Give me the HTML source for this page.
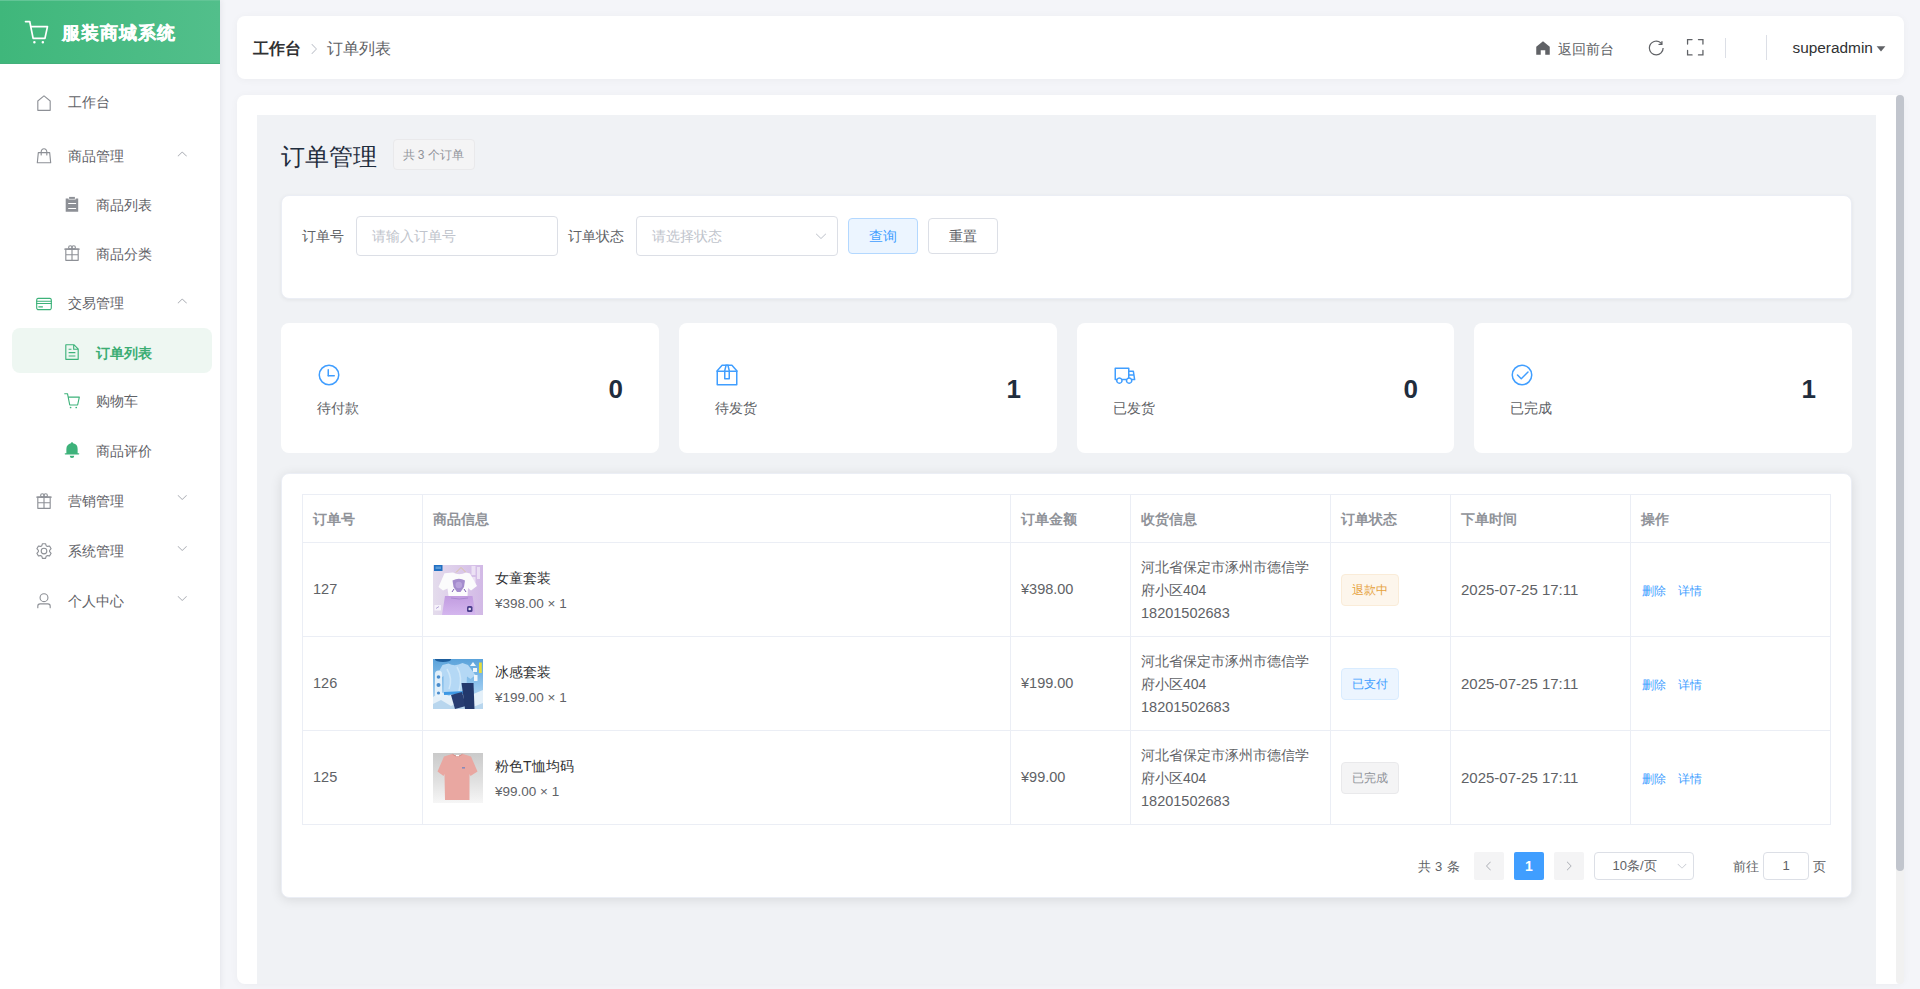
<!DOCTYPE html>
<html lang="zh"><head><meta charset="utf-8"><title>订单列表</title>
<style>
*{box-sizing:border-box;margin:0;padding:0}
html,body{width:1920px;height:989px;overflow:hidden}
body{background:#f4f5f9;font-family:"Liberation Sans",sans-serif;color:#606266;position:relative;font-size:14px}
.abs{position:absolute}
svg{display:block}
.t{position:absolute;white-space:nowrap;line-height:20px}
#side{position:absolute;left:0;top:0;width:220px;height:989px;background:#fff;box-shadow:1px 0 6px rgba(0,21,41,.07);z-index:2}
#logo{position:absolute;left:0;top:0;width:220px;height:64px;background:linear-gradient(90deg,#3fb77b,#52bf8b);border-top:1px solid #62c596;border-bottom:1px solid #43b07b}
.prod{overflow:hidden}

.p0{background:linear-gradient(135deg,#e6d9f0,#d4bfe6)}
.p1{background:linear-gradient(180deg,#5ea4dc,#a8d0f0 70%,#e0eef8)}
.p2{background:linear-gradient(180deg,#c8c8c8,#f2f2f2)}
</style></head>
<body>
<div id="side">
<div id="logo">
<svg class="abs" style="left:23px;top:17.6px" width="27" height="27" viewBox="0 0 1024 1024" fill="#fff"><path d="M432 928a48 48 0 1 1 0-96 48 48 0 0 1 0 96m320 0a48 48 0 1 1 0-96 48 48 0 0 1 0 96M96 128a32 32 0 0 1 0-64h160a32 32 0 0 1 31.36 25.728L320.64 256H928a32 32 0 0 1 31.296 38.72l-96 448A32 32 0 0 1 832 768H384a32 32 0 0 1-31.36-25.728L229.76 128zm314.24 576h395.904l82.304-384H333.44l76.8 384z"/></svg>
<div class="t" style="left:62px;top:21.7px;font-size:18px;color:#fff;letter-spacing:1px;font-weight:bold;-webkit-text-stroke:0.3px #fff;">服装商城系统</div>
</div>
<svg class="abs" style="left:35px;top:93.5px" width="18" height="18" viewBox="0 0 1024 1024" fill="#8d9096"><path d="M192 413.952V896h640V413.952L512 147.328zM139.52 374.4l352-293.312a32 32 0 0 1 40.96 0l352 293.312A32 32 0 0 1 896 398.976V928a32 32 0 0 1-32 32H160a32 32 0 0 1-32-32V398.976a32 32 0 0 1 11.52-24.576"/></svg>
<div class="t" style="left:68px;top:92.0px;font-size:14px;color:#5f6267;">工作台</div>
<svg class="abs" style="left:35px;top:147px" width="18" height="18" viewBox="0 0 1024 1024" fill="#8d9096"><path d="M320 288v-22.336C320 154.688 405.504 64 512 64s192 90.688 192 201.664v22.4h131.072a32 32 0 0 1 31.808 28.8l57.6 576a32 32 0 0 1-31.808 35.2H131.328a32 32 0 0 1-31.808-35.2l57.6-576a32 32 0 0 1 31.808-28.8H320zm64 0h256v-22.336C640 189.248 582.272 128 512 128c-70.272 0-128 61.248-128 137.664v22.4zm-64 64H217.92l-51.2 512h690.56l-51.264-512H704v96a32 32 0 1 1-64 0v-96H384v96a32 32 0 0 1-64 0z"/></svg>
<div class="t" style="left:68px;top:145.5px;font-size:14px;color:#5f6267;">商品管理</div>
<svg class="abs" style="left:175.7px;top:148.4px" width="12.5" height="12.5" viewBox="0 0 1024 1024" fill="#a8abb2"><path d="M831.872 683.136 512 371.328 192.128 683.136a30.592 30.592 0 0 1-42.752 0 29.12 29.12 0 0 1 0-41.6L489.664 309.76a32 32 0 0 1 44.672 0l340.288 331.712a29.12 29.12 0 0 1 0 41.728 30.592 30.592 0 0 1-42.752 0z"/></svg>
<svg class="abs" style="left:63px;top:196px" width="18" height="18" viewBox="0 0 1024 1024" fill="#8d9096"><path fill-rule="evenodd" d="M153.6 147.9h159.3v51.2h409.6v-51.2h142.2V898.8H153.6zM295.8 398.2h449.4v62.6h-449.4zM295.8 677.0h449.4v62.6h-449.4z"/><path d="M347.0 51.2h330.0v113.8h-330.0z"/></svg>
<div class="t" style="left:96px;top:194.5px;font-size:14px;color:#5f6267;">商品列表</div>
<svg class="abs" style="left:63px;top:244.4px" width="18" height="18" viewBox="0 0 1024 1024" fill="#8d9096"><path d="M480 896V640H192v-64h288V320H192v576zm64 0h288V320H544v256h288v64H544zM128 256h768v672a32 32 0 0 1-32 32H160a32 32 0 0 1-32-32z"/><path d="M96 256h832q32 0 32 32t-32 32H96q-32 0-32-32t32-32"/><path d="M416 256a64 64 0 1 0 0-128 64 64 0 0 0 0 128m0 64a128 128 0 1 1 0-256 128 128 0 0 1 0 256"/><path d="M608 256a64 64 0 1 0 0-128 64 64 0 0 0 0 128m0 64a128 128 0 1 1 0-256 128 128 0 0 1 0 256"/></svg>
<div class="t" style="left:96px;top:243.5px;font-size:14px;color:#5f6267;">商品分类</div>
<svg class="abs" style="left:35px;top:295px" width="18" height="18" viewBox="0 0 1024 1024" fill="#3db27a"><path d="M896 324.096c0-42.368-2.496-55.296-9.536-68.48a52.352 52.352 0 0 0-22.144-22.08c-13.12-7.04-26.048-9.536-68.416-9.536H228.096c-42.368 0-55.296 2.496-68.48 9.536a52.352 52.352 0 0 0-22.08 22.144c-7.04 13.12-9.536 26.048-9.536 68.416v375.808c0 42.368 2.496 55.296 9.536 68.48a52.352 52.352 0 0 0 22.144 22.08c13.12 7.04 26.048 9.536 68.416 9.536h567.808c42.368 0 55.296-2.496 68.48-9.536a52.352 52.352 0 0 0 22.08-22.144c7.04-13.12 9.536-26.048 9.536-68.416zm64 0v375.808c0 57.088-5.952 77.76-17.088 98.56-11.136 20.928-27.52 37.312-48.384 48.448-20.864 11.136-41.6 17.088-98.56 17.088H228.032c-57.088 0-77.76-5.952-98.56-17.088a116.288 116.288 0 0 1-48.448-48.384c-11.136-20.864-17.088-41.6-17.088-98.56V324.032c0-57.088 5.952-77.76 17.088-98.56 11.136-20.928 27.52-37.312 48.384-48.448 20.864-11.136 41.6-17.088 98.56-17.088H795.84c57.088 0 77.76 5.952 98.56 17.088 20.928 11.136 37.312 27.52 48.448 48.384 11.136 20.864 17.088 41.6 17.088 98.56z"/><path d="M64 320h896v64H64zm0 128h896v64H64zm128 192h256v64H192z"/></svg>
<div class="t" style="left:68px;top:292.5px;font-size:14px;color:#5f6267;">交易管理</div>
<svg class="abs" style="left:175.7px;top:295.4px" width="12.5" height="12.5" viewBox="0 0 1024 1024" fill="#a8abb2"><path d="M831.872 683.136 512 371.328 192.128 683.136a30.592 30.592 0 0 1-42.752 0 29.12 29.12 0 0 1 0-41.6L489.664 309.76a32 32 0 0 1 44.672 0l340.288 331.712a29.12 29.12 0 0 1 0 41.728 30.592 30.592 0 0 1-42.752 0z"/></svg>
<div class="abs" style="left:12px;top:328px;width:200px;height:45px;border-radius:8px;background:#eef7f2"></div>
<svg class="abs" style="left:63px;top:343.2px" width="18" height="18" viewBox="0 0 1024 1024" fill="#3db27a"><path d="M832 384H576V128H192v768h640zm-26.496-64L640 154.496V320zM160 64h480l256 256v608a32 32 0 0 1-32 32H160a32 32 0 0 1-32-32V96a32 32 0 0 1 32-32m160 448h384v64H320zm0-192h160v64H320zm0 384h384v64H320z"/></svg>
<div class="t" style="left:96px;top:343px;font-size:14px;color:#3bad73;font-weight:bold;">订单列表</div>
<svg class="abs" style="left:63px;top:392px" width="18" height="18" viewBox="0 0 1024 1024" fill="#3db27a"><path d="M432 928a48 48 0 1 1 0-96 48 48 0 0 1 0 96m320 0a48 48 0 1 1 0-96 48 48 0 0 1 0 96M96 128a32 32 0 0 1 0-64h160a32 32 0 0 1 31.36 25.728L320.64 256H928a32 32 0 0 1 31.296 38.72l-96 448A32 32 0 0 1 832 768H384a32 32 0 0 1-31.36-25.728L229.76 128zm314.24 576h395.904l82.304-384H333.44l76.8 384z"/></svg>
<div class="t" style="left:96px;top:390.5px;font-size:14px;color:#5f6267;">购物车</div>
<svg class="abs" style="left:63px;top:441px" width="18" height="18" viewBox="0 0 1024 1024" fill="#3db27a"><path d="M640 832a128 128 0 0 1-256 0zm192-64H134.4a38.4 38.4 0 0 1 0-76.8H192V448c0-154.88 110.08-284.16 256.128-313.6a64 64 0 1 1 127.744 0A320.128 320.128 0 0 1 832 448v243.2h57.6a38.4 38.4 0 0 1 0 76.8z"/></svg>
<div class="t" style="left:96px;top:440.5px;font-size:14px;color:#5f6267;">商品评价</div>
<svg class="abs" style="left:35px;top:492px" width="18" height="18" viewBox="0 0 1024 1024" fill="#8d9096"><path d="M480 896V640H192v-64h288V320H192v576zm64 0h288V320H544v256h288v64H544zM128 256h768v672a32 32 0 0 1-32 32H160a32 32 0 0 1-32-32z"/><path d="M96 256h832q32 0 32 32t-32 32H96q-32 0-32-32t32-32"/><path d="M416 256a64 64 0 1 0 0-128 64 64 0 0 0 0 128m0 64a128 128 0 1 1 0-256 128 128 0 0 1 0 256"/><path d="M608 256a64 64 0 1 0 0-128 64 64 0 0 0 0 128m0 64a128 128 0 1 1 0-256 128 128 0 0 1 0 256"/></svg>
<div class="t" style="left:68px;top:490.5px;font-size:14px;color:#5f6267;">营销管理</div>
<svg class="abs" style="left:175.7px;top:491.4px" width="12.5" height="12.5" viewBox="0 0 1024 1024" fill="#a8abb2"><path d="M831.872 340.864 512 652.672 192.128 340.864a30.592 30.592 0 0 0-42.752 0 29.12 29.12 0 0 0 0 41.6L489.664 714.24a32 32 0 0 0 44.672 0l340.288-331.712a29.12 29.12 0 0 0 0-41.728 30.592 30.592 0 0 0-42.752 0z"/></svg>
<svg class="abs" style="left:35px;top:542px" width="18" height="18" viewBox="0 0 1024 1024" fill="#8d9096"><path d="M600.704 64a32 32 0 0 1 30.464 22.208l35.2 109.376c14.784 7.232 28.928 15.36 42.432 24.512l112.384-24.192a32 32 0 0 1 34.432 15.36L944.32 364.8a32 32 0 0 1-4.032 37.504l-77.12 85.12a357.12 357.12 0 0 1 0 49.024l77.12 85.248a32 32 0 0 1 4.032 37.504l-88.704 153.6a32 32 0 0 1-34.432 15.296L708.8 803.904c-13.440 9.088-27.648 17.28-42.368 24.512l-35.264 109.376A32 32 0 0 1 600.704 960H423.296a32 32 0 0 1-30.464-22.208L357.696 828.48a351.616 351.616 0 0 1-42.560-24.640l-112.320 24.256a32 32 0 0 1-34.432-15.360L79.68 659.2a32 32 0 0 1 4.032-37.504l77.120-85.248a357.12 357.12 0 0 1 0-48.896l-77.120-85.248A32 32 0 0 1 79.68 364.8l88.704-153.6a32 32 0 0 1 34.432-15.296l112.320 24.256c13.568-9.152 27.776-17.408 42.560-24.640l35.200-109.312A32 32 0 0 1 423.232 64H600.640zm-23.424 64H446.720l-36.352 113.088-24.512 11.968a294.113 294.113 0 0 0-34.816 20.096l-22.656 15.360-116.224-25.088-65.280 113.152 79.680 88.192-1.920 27.136a293.12 293.12 0 0 0 0 40.192l1.920 27.136-79.808 88.192 65.344 113.152 116.224-25.024 22.656 15.296a294.113 294.113 0 0 0 34.816 20.096l24.512 11.968L446.720 896h130.688l36.480-113.152 24.448-11.904a288.282 288.282 0 0 0 34.752-20.096l22.592-15.296 116.288 25.024 65.280-113.152-79.744-88.192 1.920-27.136a293.12 293.12 0 0 0 0-40.256l-1.920-27.136 79.808-88.128-65.344-113.152-116.288 24.960-22.592-15.232a287.616 287.616 0 0 0-34.752-20.096l-24.448-11.904L577.344 128zM512 320a192 192 0 1 1 0 384 192 192 0 0 1 0-384m0 64a128 128 0 1 0 0 256 128 128 0 0 0 0-256"/></svg>
<div class="t" style="left:68px;top:540.5px;font-size:14px;color:#5f6267;">系统管理</div>
<svg class="abs" style="left:175.7px;top:541.5px" width="12.5" height="12.5" viewBox="0 0 1024 1024" fill="#a8abb2"><path d="M831.872 340.864 512 652.672 192.128 340.864a30.592 30.592 0 0 0-42.752 0 29.12 29.12 0 0 0 0 41.6L489.664 714.24a32 32 0 0 0 44.672 0l340.288-331.712a29.12 29.12 0 0 0 0-41.728 30.592 30.592 0 0 0-42.752 0z"/></svg>
<svg class="abs" style="left:35px;top:592px" width="18" height="18" viewBox="0 0 1024 1024" fill="#8d9096"><path d="M512 512a192 192 0 1 0 0-384 192 192 0 0 0 0 384m0 64a256 256 0 1 1 0-512 256 256 0 0 1 0 512m320 320v-96a96 96 0 0 0-96-96H288a96 96 0 0 0-96 96v96a32 32 0 1 1-64 0v-96a160 160 0 0 1 160-160h448a160 160 0 0 1 160 160v96a32 32 0 1 1-64 0"/></svg>
<div class="t" style="left:68px;top:590.5px;font-size:14px;color:#5f6267;">个人中心</div>
<svg class="abs" style="left:175.7px;top:591.5px" width="12.5" height="12.5" viewBox="0 0 1024 1024" fill="#a8abb2"><path d="M831.872 340.864 512 652.672 192.128 340.864a30.592 30.592 0 0 0-42.752 0 29.12 29.12 0 0 0 0 41.6L489.664 714.24a32 32 0 0 0 44.672 0l340.288-331.712a29.12 29.12 0 0 0 0-41.728 30.592 30.592 0 0 0-42.752 0z"/></svg>
</div>
<div class="abs" style="left:237px;top:16px;width:1667px;height:63px;background:#fff;border-radius:8px;box-shadow:0 1px 8px rgba(0,0,0,.04)"></div>
<div class="t" style="left:253px;top:38.7px;font-size:16px;color:#303133;font-weight:bold;">工作台</div>
<svg class="abs" style="left:307px;top:41.6px" width="14" height="14" viewBox="0 0 1024 1024" fill="#c0c4cc"><path d="M340.864 149.312a30.592 30.592 0 0 0 0 42.752L652.736 512 340.864 831.872a30.592 30.592 0 0 0 0 42.752 29.12 29.12 0 0 0 41.728 0L714.24 534.336a32 32 0 0 0 0-44.672L382.592 149.376a29.12 29.12 0 0 0-41.728 0z"/></svg>
<div class="t" style="left:327px;top:39px;font-size:16px;color:#606266;">订单列表</div>
<svg class="abs" style="left:1533.9px;top:38.7px" width="18" height="18" viewBox="0 0 1024 1024" fill="#606266"><path d="M512 128 128 447.936V896h255.936V640H640v256h255.936V447.936z"/></svg>
<div class="t" style="left:1557.5px;top:38.8px;font-size:14px;color:#606266;">返回前台</div>
<svg class="abs" style="left:1645.6px;top:37.6px" width="20" height="20" viewBox="0 0 1024 1024" fill="#606266"><path d="M784.512 230.272v-50.56a32 32 0 1 1 64 0v149.056a32 32 0 0 1-32 32H667.52a32 32 0 1 1 0-64h92.992A320 320 0 1 0 524.8 833.152a320 320 0 0 0 320-320h64a384 384 0 0 1-384 384 384 384 0 0 1-384-384 384 384 0 0 1 643.712-282.88z"/></svg>
<svg class="abs" style="left:1685.3px;top:37.4px" width="20.5" height="20.5" viewBox="0 0 1024 1024" fill="#606266"><path d="m160 96.064 192 .192a32 32 0 0 1 0 64l-192-.192V352a32 32 0 0 1-64 0V96h64zm0 831.872V928H96V672a32 32 0 1 1 64 0v191.936l192-.192a32 32 0 1 1 0 64zM864 96.064V96h64v256a32 32 0 1 1-64 0V160.064l-192 .192a32 32 0 1 1 0-64zm0 831.872-192-.192a32 32 0 0 1 0-64l192 .192V672a32 32 0 1 1 64 0v256h-64z"/></svg>
<div class="abs" style="left:1725px;top:38px;width:1px;height:20px;background:#dcdfe6"></div>
<div class="abs" style="left:1766px;top:35px;width:1px;height:25px;background:#dcdfe6"></div>
<div class="t" style="left:1792.5px;top:38px;font-size:15.4px;color:#303133;">superadmin</div>
<svg class="abs" style="left:1874.1px;top:40.75px" width="14" height="14" viewBox="0 0 1024 1024" fill="#606266"><path d="m192 384 320 384 320-384z"/></svg>
<div class="abs" style="left:237px;top:95px;width:1667px;height:889px;background:#fff;border-radius:8px;box-shadow:0 1px 8px rgba(0,0,0,.04)"></div>
<div class="abs" style="left:257px;top:115px;width:1619px;height:869px;background:#f0f2f5"></div>
<div class="abs" style="left:1896px;top:95px;width:8px;height:889px;background:#f1f1f1;border-radius:4px"></div>
<div class="abs" style="left:1896px;top:95px;width:8px;height:776px;background:#c1c5cd;border-radius:4px"></div>
<div class="t" style="left:281px;top:146.5px;font-size:24px;color:#1f2d3d;">订单管理</div>
<div class="abs" style="left:393px;top:139px;width:82px;height:31px;background:#f4f4f5;border:1px solid #e9e9eb;border-radius:4px"></div>
<div class="t" style="left:402.5px;top:145.3px;font-size:12px;color:#909399;">共 3 个订单</div>
<div class="abs" style="left:281px;top:195px;width:1571px;height:104px;background:#fff;border:1px solid #ebeef5;border-radius:8px;box-shadow:0 1px 4px rgba(0,0,0,.06)"></div>
<div class="t" style="left:302px;top:225.8px;font-size:14px;color:#606266;">订单号</div>
<div class="abs" style="left:356px;top:216px;width:202px;height:40px;border:1px solid #dcdfe6;border-radius:4px;background:#fff"></div>
<div class="t" style="left:372px;top:226px;font-size:14px;color:#c0c4cc;">请输入订单号</div>
<div class="t" style="left:568px;top:225.8px;font-size:14px;color:#606266;">订单状态</div>
<div class="abs" style="left:636px;top:216px;width:202px;height:40px;border:1px solid #dcdfe6;border-radius:4px;background:#fff"></div>
<div class="t" style="left:652px;top:226px;font-size:14px;color:#c0c4cc;">请选择状态</div>
<svg class="abs" style="left:813.5px;top:229px" width="14" height="14" viewBox="0 0 1024 1024" fill="#c0c4cc"><path d="M831.872 340.864 512 652.672 192.128 340.864a30.592 30.592 0 0 0-42.752 0 29.12 29.12 0 0 0 0 41.6L489.664 714.24a32 32 0 0 0 44.672 0l340.288-331.712a29.12 29.12 0 0 0 0-41.728 30.592 30.592 0 0 0-42.752 0z"/></svg>
<div class="abs" style="left:848px;top:218px;width:70px;height:36px;border:1px solid #b3d8ff;border-radius:4px;background:#ecf5ff"></div>
<div class="t" style="left:869px;top:226px;font-size:14px;color:#409eff;">查询</div>
<div class="abs" style="left:928px;top:218px;width:70px;height:36px;border:1px solid #dcdfe6;border-radius:4px;background:#fff"></div>
<div class="t" style="left:949px;top:226px;font-size:14px;color:#606266;">重置</div>
<div class="abs" style="left:281px;top:323px;width:378px;height:130px;background:#fff;border-radius:8px"></div>
<svg class="abs" style="left:317px;top:363px" width="24" height="24" viewBox="0 0 1024 1024" fill="#409eff"><path d="M512 896a384 384 0 1 0 0-768 384 384 0 0 0 0 768m0 64a448 448 0 1 1 0-896 448 448 0 0 1 0 896"/><path d="M480 256a32 32 0 0 1 32 32v256a32 32 0 0 1-64 0V288a32 32 0 0 1 32-32"/><path d="M480 512h256q32 0 32 32t-32 32H480q-32 0-32-32t32-32"/></svg>
<div class="t" style="left:317px;top:398px;font-size:14px;color:#606266;">待付款</div>
<div class="t" style="left:563px;width:60px;text-align:right;top:379px;font-size:26px;font-weight:bold;color:#1f2d3d">0</div>
<div class="abs" style="left:679px;top:323px;width:378px;height:130px;background:#fff;border-radius:8px"></div>
<svg class="abs" style="left:715px;top:363px" width="24" height="24" viewBox="0 0 1024 1024" fill="#409eff"><path d="M317.056 128 128 344.064V896h768V344.064L706.944 128zm-14.528-64h418.944a32 32 0 0 1 24.064 10.88l206.528 236.096A32 32 0 0 1 960 332.032V928a32 32 0 0 1-32 32H96a32 32 0 0 1-32-32V332.032a32 32 0 0 1 7.936-21.056L278.4 74.88A32 32 0 0 1 302.528 64z"/><path d="M64 320h896v64H64z"/><path d="M448 327.872V640h128V327.872L526.08 128h-28.16zM448 64h128l64 256v352a32 32 0 0 1-32 32H416a32 32 0 0 1-32-32V320z"/></svg>
<div class="t" style="left:715px;top:398px;font-size:14px;color:#606266;">待发货</div>
<div class="t" style="left:961px;width:60px;text-align:right;top:379px;font-size:26px;font-weight:bold;color:#1f2d3d">1</div>
<div class="abs" style="left:1077px;top:323px;width:377px;height:130px;background:#fff;border-radius:8px"></div>
<svg class="abs" style="left:1113px;top:363px" width="24" height="24" viewBox="0 0 1024 1024" fill="#409eff"><path d="M128.896 736H96a32 32 0 0 1-32-32V224a32 32 0 0 1 32-32h576a32 32 0 0 1 32 32v96h164.544a32 32 0 0 1 31.616 27.136l54.144 352A32 32 0 0 1 922.688 736h-91.52a144 144 0 1 1-286.272 0H415.104a144 144 0 1 1-286.272 0zm23.36-64a143.872 143.872 0 0 1 239.488 0H568.32c17.088-25.6 42.24-45.376 71.744-55.808V256H128v416zm655.488 0h77.632l-19.648-128H704v64.896A144 144 0 0 1 807.744 672m48.128-192-14.72-96H704v96h151.872M688 832a80 80 0 1 0 0-160 80 80 0 0 0 0 160m-416 0a80 80 0 1 0 0-160 80 80 0 0 0 0 160"/></svg>
<div class="t" style="left:1113px;top:398px;font-size:14px;color:#606266;">已发货</div>
<div class="t" style="left:1358px;width:60px;text-align:right;top:379px;font-size:26px;font-weight:bold;color:#1f2d3d">0</div>
<div class="abs" style="left:1474px;top:323px;width:378px;height:130px;background:#fff;border-radius:8px"></div>
<svg class="abs" style="left:1510px;top:363px" width="24" height="24" viewBox="0 0 1024 1024" fill="#409eff"><path d="M512 896a384 384 0 1 0 0-768 384 384 0 0 0 0 768m0 64a448 448 0 1 1 0-896 448 448 0 0 1 0 896"/><path d="M745.344 361.344a32 32 0 0 1 45.312 45.312l-288 288a32 32 0 0 1-45.312 0l-160-160a32 32 0 1 1 45.312-45.312L480 626.752l265.344-265.408z"/></svg>
<div class="t" style="left:1510px;top:398px;font-size:14px;color:#606266;">已完成</div>
<div class="t" style="left:1756px;width:60px;text-align:right;top:379px;font-size:26px;font-weight:bold;color:#1f2d3d">1</div>
<div class="abs" style="left:281px;top:473px;width:1571px;height:425px;background:#fff;border:1px solid #ebeef5;border-radius:8px;box-shadow:0 2px 12px rgba(0,0,0,.1)"></div>
<div class="abs" style="left:302px;top:494px;width:1529px;height:1px;background:#ebeef5"></div>
<div class="abs" style="left:302px;top:542px;width:1529px;height:1px;background:#ebeef5"></div>
<div class="abs" style="left:302px;top:636px;width:1529px;height:1px;background:#ebeef5"></div>
<div class="abs" style="left:302px;top:730px;width:1529px;height:1px;background:#ebeef5"></div>
<div class="abs" style="left:302px;top:824px;width:1529px;height:1px;background:#ebeef5"></div>
<div class="abs" style="left:302px;top:494px;width:1px;height:331px;background:#ebeef5"></div>
<div class="abs" style="left:422px;top:494px;width:1px;height:331px;background:#ebeef5"></div>
<div class="abs" style="left:1010px;top:494px;width:1px;height:331px;background:#ebeef5"></div>
<div class="abs" style="left:1130px;top:494px;width:1px;height:331px;background:#ebeef5"></div>
<div class="abs" style="left:1330px;top:494px;width:1px;height:331px;background:#ebeef5"></div>
<div class="abs" style="left:1450px;top:494px;width:1px;height:331px;background:#ebeef5"></div>
<div class="abs" style="left:1630px;top:494px;width:1px;height:331px;background:#ebeef5"></div>
<div class="abs" style="left:1830px;top:494px;width:1px;height:331px;background:#ebeef5"></div>
<div class="t" style="left:313px;top:509.3px;font-size:14px;color:#909399;font-weight:bold;">订单号</div>
<div class="t" style="left:433px;top:509.3px;font-size:14px;color:#909399;font-weight:bold;">商品信息</div>
<div class="t" style="left:1021px;top:509.3px;font-size:14px;color:#909399;font-weight:bold;">订单金额</div>
<div class="t" style="left:1141px;top:509.3px;font-size:14px;color:#909399;font-weight:bold;">收货信息</div>
<div class="t" style="left:1341px;top:509.3px;font-size:14px;color:#909399;font-weight:bold;">订单状态</div>
<div class="t" style="left:1461px;top:509.3px;font-size:14px;color:#909399;font-weight:bold;">下单时间</div>
<div class="t" style="left:1641px;top:509.3px;font-size:14px;color:#909399;font-weight:bold;">操作</div>
<div class="t" style="left:313px;top:579.3px;font-size:14.5px;color:#606266;">127</div>
<div class="abs prod" style="left:433px;top:565px;width:50px;height:50px"><svg width="50" height="50" viewBox="0 0 50 50">
<defs><linearGradient id="g0" x1="0" y1="0" x2="1" y2="0"><stop offset="0" stop-color="#e4dcec"/><stop offset=".5" stop-color="#dccbea"/><stop offset="1" stop-color="#d2b9e6"/></linearGradient>
<linearGradient id="s0" x1="0" y1="0" x2="0" y2="1"><stop offset="0" stop-color="#c19ce0"/><stop offset="1" stop-color="#d4b6ee"/></linearGradient></defs>
<rect width="50" height="50" fill="url(#g0)"/>
<rect x="1" y="0" width="8.5" height="6" fill="#2270c2"/>
<rect x="2.5" y="1.5" width="5.5" height="2.5" fill="#5a9ad8"/>
<path d="M38.5 1h4v9h-4zM39 12h3.5v10h-3.5zM44 2h3v12h-3z" fill="#f3ecf8" opacity=".75"/>
<path d="M23 7.5 L28 2.5 L33 7.5" fill="none" stroke="#d8c49e" stroke-width="1"/>
<path d="M20 7.5 Q26 11 33 7.5 L37 8.5 L44 21 L38 25.5 L35 23 L34.5 31 L15.5 31 L14.5 23.5 L10 25.5 L5.5 22 L11.5 8.2 Z" fill="#fbfbfc"/>
<path d="M19.5 15.5 Q26 12 32 15.5 L31 22 L27.5 27 L24 27 L20.5 22 Z" fill="#8f70c0" opacity=".8"/>
<circle cx="25.8" cy="20" r="3.3" fill="#b9a3dc"/>
<path d="M21 24l-2 3M31 24l2 3" stroke="#7a5eb2" stroke-width="1"/>
<path d="M12 31 L39.5 31 L42.5 50 L9 50 Z" fill="url(#s0)"/>
<path d="M18 33 Q26 35 35 33" stroke="#a988d0" stroke-width="1" fill="none"/>
<rect x="34" y="41" width="5.5" height="6" rx="1.5" fill="#4a3e8c"/>
<circle cx="36.7" cy="44" r="1.3" fill="#e6e0f4"/>
<rect x="1.5" y="40" width="6.5" height="5.5" fill="#f6f2fa"/>
<path d="M3 43.5l3-2" stroke="#9a86c8" stroke-width=".7"/>
</svg></div>
<div class="t" style="left:495px;top:567.5px;font-size:14px;color:#303133;">女童套装</div>
<div class="t" style="left:495px;top:594px;font-size:13.5px;color:#606266;">¥398.00 × 1</div>
<div class="t" style="left:1021px;top:579.3px;font-size:14.5px;color:#606266;">¥398.00</div>
<div class="t" style="left:1141px;top:557.3px;font-size:14px;color:#606266;">河北省保定市涿州市德信学</div>
<div class="t" style="left:1141px;top:580px;font-size:14px;color:#606266;">府小区404</div>
<div class="t" style="left:1141px;top:602.5px;font-size:14.5px;color:#606266;">18201502683</div>
<div class="abs" style="left:1341px;top:574px;width:58px;height:32px;background:#fdf6ec;border:1px solid #faecd8;border-radius:4px"></div>
<div class="t" style="left:1352px;top:580.3px;font-size:12px;color:#e6a23c;">退款中</div>
<div class="t" style="left:1461px;top:579.5px;font-size:15px;color:#606266;">2025-07-25 17:11</div>
<div class="t" style="left:1642px;top:580.7px;font-size:12px;color:#409eff;">删除</div>
<div class="t" style="left:1678px;top:580.7px;font-size:12px;color:#409eff;">详情</div>
<div class="t" style="left:313px;top:673.3px;font-size:14.5px;color:#606266;">126</div>
<div class="abs prod" style="left:433px;top:659px;width:50px;height:50px"><svg width="50" height="50" viewBox="0 0 50 50">
<defs><linearGradient id="g1" x1="0" y1="0" x2="0" y2="1"><stop offset="0" stop-color="#5aa2da"/><stop offset=".5" stop-color="#8ec3ec"/><stop offset="1" stop-color="#cfe5f6"/></linearGradient></defs>
<rect width="50" height="50" fill="url(#g1)"/>
<path d="M0 38 L8 33 L16 37 L26 30 L38 36 L50 31 L50 50 L0 50 Z" fill="#e4f0f9"/>
<path d="M0 45 L8 41 L18 47 L28 42 L40 48 L50 44 L50 50 L0 50Z" fill="#b8d6ee"/>
<ellipse cx="10" cy="0.5" rx="8" ry="2.5" fill="#1d5d9c"/>
<path d="M15.5 4.5 Q22 8 29.5 4 L35 6 L42.5 16 L37.5 20 L34 17.5 L33 34 L11 35 L10.5 17 L8 19 L5 14 L9.5 6 Z" fill="#b4d8f5"/>
<path d="M14 10 Q20 20 16 30M24 8 Q30 18 26 32" stroke="#d6ebfa" stroke-width="1.5" fill="none" opacity=".8"/>
<path d="M11 33 L33 32 L33 35 L11 36 Z" fill="#3d98e4"/>
<path d="M18 36 L29 33 L33 47 L22 50 Z" fill="#273d72"/>
<path d="M28.5 24 L40.5 24 L41.5 50 L32 50 Z" fill="#22386c"/>
<rect x="2" y="11.5" width="7" height="27" rx="3.5" fill="#e8f3fb" opacity=".92"/>
<circle cx="5.5" cy="18" r="1.8" fill="#4a8ccc"/>
<circle cx="5.5" cy="26" r="2" fill="#4a8ccc"/>
<circle cx="5.5" cy="34" r="1.6" fill="#4a8ccc"/>
<rect x="46" y="3.5" width="2.8" height="10.5" fill="#e6dc3c"/>
<path d="M40 3l3 4h-6zM40 9h4v4h-4zM41 16h3.5v6h-3.5z" fill="#f0f6fb"/>
</svg></div>
<div class="t" style="left:495px;top:661.5px;font-size:14px;color:#303133;">冰感套装</div>
<div class="t" style="left:495px;top:688px;font-size:13.5px;color:#606266;">¥199.00 × 1</div>
<div class="t" style="left:1021px;top:673.3px;font-size:14.5px;color:#606266;">¥199.00</div>
<div class="t" style="left:1141px;top:651.3px;font-size:14px;color:#606266;">河北省保定市涿州市德信学</div>
<div class="t" style="left:1141px;top:674px;font-size:14px;color:#606266;">府小区404</div>
<div class="t" style="left:1141px;top:696.5px;font-size:14.5px;color:#606266;">18201502683</div>
<div class="abs" style="left:1341px;top:668px;width:58px;height:32px;background:#ecf5ff;border:1px solid #d9ecff;border-radius:4px"></div>
<div class="t" style="left:1352px;top:674.3px;font-size:12px;color:#409eff;">已支付</div>
<div class="t" style="left:1461px;top:673.5px;font-size:15px;color:#606266;">2025-07-25 17:11</div>
<div class="t" style="left:1642px;top:674.7px;font-size:12px;color:#409eff;">删除</div>
<div class="t" style="left:1678px;top:674.7px;font-size:12px;color:#409eff;">详情</div>
<div class="t" style="left:313px;top:767.3px;font-size:14.5px;color:#606266;">125</div>
<div class="abs prod" style="left:433px;top:753px;width:50px;height:50px"><svg width="50" height="50" viewBox="0 0 50 50">
<defs><linearGradient id="g2" x1="0" y1="0" x2="0" y2="1"><stop offset="0" stop-color="#cacaca"/><stop offset=".55" stop-color="#e0e0e0"/><stop offset="1" stop-color="#f6f6f6"/></linearGradient></defs>
<rect width="50" height="50" fill="url(#g2)"/>
<path d="M19 1 Q24.5 4.5 30 1 L38 3.5 L44.5 18.5 L37.5 23 L36.5 21 L36.5 47 L12 47 L11.5 21 L10.5 23 L4.5 18.5 L11 3.5 Z" fill="#e9a7a1"/>
<path d="M19.5 1.2 Q24.5 5.5 29.5 1.2" stroke="#d8918b" stroke-width="1" fill="none"/>
<rect x="23" y="2" width="3" height="1.2" fill="#fff"/>
<rect x="29" y="14" width="3" height="1.6" fill="#8a8ab8"/>
</svg></div>
<div class="t" style="left:495px;top:755.5px;font-size:14px;color:#303133;">粉色T恤均码</div>
<div class="t" style="left:495px;top:782px;font-size:13.5px;color:#606266;">¥99.00 × 1</div>
<div class="t" style="left:1021px;top:767.3px;font-size:14.5px;color:#606266;">¥99.00</div>
<div class="t" style="left:1141px;top:745.3px;font-size:14px;color:#606266;">河北省保定市涿州市德信学</div>
<div class="t" style="left:1141px;top:768px;font-size:14px;color:#606266;">府小区404</div>
<div class="t" style="left:1141px;top:790.5px;font-size:14.5px;color:#606266;">18201502683</div>
<div class="abs" style="left:1341px;top:762px;width:58px;height:32px;background:#f4f4f5;border:1px solid #e9e9eb;border-radius:4px"></div>
<div class="t" style="left:1352px;top:768.3px;font-size:12px;color:#909399;">已完成</div>
<div class="t" style="left:1461px;top:767.5px;font-size:15px;color:#606266;">2025-07-25 17:11</div>
<div class="t" style="left:1642px;top:768.7px;font-size:12px;color:#409eff;">删除</div>
<div class="t" style="left:1678px;top:768.7px;font-size:12px;color:#409eff;">详情</div>
<div class="t" style="left:1417.5px;top:856.8px;font-size:13px;color:#606266;word-spacing:1px;">共 3 条</div>
<div class="abs" style="left:1474px;top:852px;width:30px;height:28px;background:#f4f4f5;border-radius:2px"></div>
<svg class="abs" style="left:1483px;top:860px" width="12" height="12" viewBox="0 0 1024 1024" fill="#a8abb2"><path d="M609.408 149.376 277.76 489.6a32 32 0 0 0 0 44.672l331.648 340.352a29.12 29.12 0 0 0 41.728 0 30.592 30.592 0 0 0 0-42.752L339.264 512l311.872-319.872a30.592 30.592 0 0 0 0-42.688 29.12 29.12 0 0 0-41.728-.064z"/></svg>
<div class="abs" style="left:1514px;top:852px;width:30px;height:28px;background:#409eff;border-radius:2px"></div>
<div class="t" style="left:1514px;width:30px;text-align:center;top:856px;font-size:14px;font-weight:bold;color:#fff">1</div>
<div class="abs" style="left:1554px;top:852px;width:30px;height:28px;background:#f4f4f5;border-radius:2px"></div>
<svg class="abs" style="left:1563px;top:860px" width="12" height="12" viewBox="0 0 1024 1024" fill="#a8abb2"><path d="M340.864 149.312a30.592 30.592 0 0 0 0 42.752L652.736 512 340.864 831.872a30.592 30.592 0 0 0 0 42.752 29.12 29.12 0 0 0 41.728 0L714.24 534.336a32 32 0 0 0 0-44.672L382.592 149.376a29.12 29.12 0 0 0-41.728 0z"/></svg>
<div class="abs" style="left:1594px;top:852px;width:100px;height:28px;border:1px solid #dcdfe6;border-radius:4px;background:#fff"></div>
<div class="t" style="left:1612.5px;top:856px;font-size:13px;color:#606266;">10条/页</div>
<svg class="abs" style="left:1675.5px;top:860px" width="12" height="12" viewBox="0 0 1024 1024" fill="#c0c4cc"><path d="M831.872 340.864 512 652.672 192.128 340.864a30.592 30.592 0 0 0-42.752 0 29.12 29.12 0 0 0 0 41.6L489.664 714.24a32 32 0 0 0 44.672 0l340.288-331.712a29.12 29.12 0 0 0 0-41.728 30.592 30.592 0 0 0-42.752 0z"/></svg>
<div class="t" style="left:1733px;top:856.5px;font-size:13px;color:#606266;">前往</div>
<div class="abs" style="left:1763px;top:852px;width:46px;height:28px;border:1px solid #dcdfe6;border-radius:4px;background:#fff"></div>
<div class="t" style="left:1763px;width:46px;text-align:center;top:856px;font-size:13px;color:#606266">1</div>
<div class="t" style="left:1813px;top:856.5px;font-size:13px;color:#606266;">页</div>
</body></html>
